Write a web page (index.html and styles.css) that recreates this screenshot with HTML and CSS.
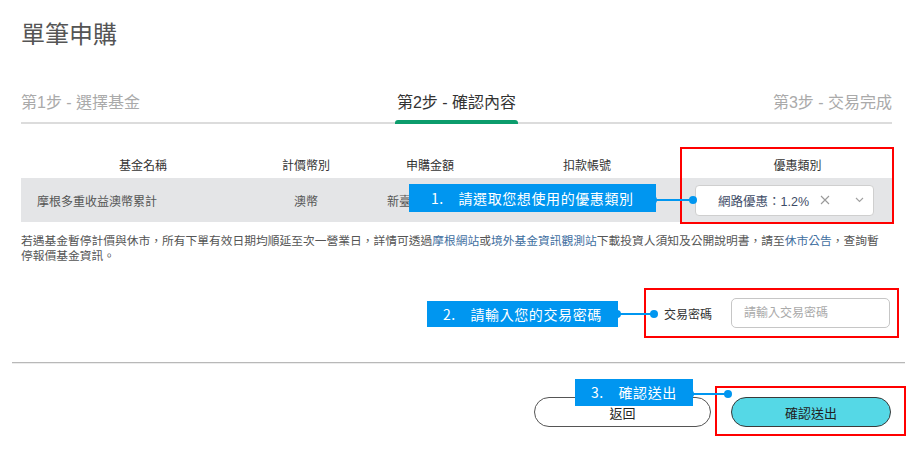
FILE: index.html
```html
<!DOCTYPE html>
<html lang="zh-Hant">
<head>
  <meta charset="UTF-8">
  <meta name="viewport" content="width=device-width, initial-scale=1.0">
  <title>單筆申購</title>
  <link rel="stylesheet" href="styles.css">
</head>
<body>
  <div class="page">
    <h1 class="title">單筆申購</h1>

    <div class="steps">
      <div class="step">第1步 - 選擇基金</div>
      <div class="step active">第2步 - 確認內容</div>
      <div class="step">第3步 - 交易完成</div>
    </div>

    <div class="fund-table">
      <div class="row head">
        <div class="cell">基金名稱</div>
        <div class="cell">計價幣別</div>
        <div class="cell">申購金額</div>
        <div class="cell">扣款帳號</div>
        <div class="cell promo">優惠類別</div>
      </div>
      <div class="row data">
        <div class="cell name">摩根多重收益澳幣累計</div>
        <div class="cell">澳幣</div>
        <div class="cell amount">新臺幣</div>
        <div class="cell"></div>
        <div class="cell promo">
          <div class="select">
            <span class="select-value">網路優惠：1.2%</span>
            <svg class="select-clear" width="10" height="10" viewBox="0 0 10 10"><path d="M1 1 L9 9 M9 1 L1 9" stroke="#9a9a9a" stroke-width="1.1" fill="none"/></svg>
            <svg class="select-arrow" width="9" height="6" viewBox="0 0 9 6"><path d="M1 1 L4.5 4.5 L8 1" stroke="#a0a0a0" stroke-width="1.1" fill="none"/></svg>
          </div>
        </div>
      </div>

      <div class="mark mark-promo"></div>
      <div class="callout callout-promo">1.　請選取您想使用的優惠類別</div>
      <div class="pin pin-promo"></div>
    </div>

    <p class="notice">若遇基金暫停計價與休市，所有下單有效日期均順延至次一營業日，詳情可透過<a href="#">摩根網站</a>或<a href="#">境外基金資訊觀測站</a>下載投資人須知及公開說明書，請至<a href="#">休市公告</a>，查詢暫<br>停報價基金資訊。</p>

    <div class="pw-row">
      <label for="tradePw" class="pw-label">交易密碼</label>
      <input type="password" id="tradePw" class="pw-input" placeholder="請輸入交易密碼">

      <div class="mark mark-pw"></div>
      <div class="callout callout-pw">2.　請輸入您的交易密碼</div>
      <div class="pin pin-pw"></div>
    </div>

    <hr class="divider">

    <div class="actions">
      <button type="button" class="btn btn-back">返回</button>
      <div class="mark-box">
        <button type="button" class="btn btn-submit">確認送出</button>
      </div>

      <div class="callout callout-submit">3.　確認送出</div>
      <div class="pin pin-submit"></div>
    </div>
  </div>
</body>
</html>
```

FILE: styles.css
```css
/* General Reset */
* {
  margin: 0;
  padding: 0;
  box-sizing: border-box;
}

html, body {
  height: 460px;
  overflow: hidden;
}

body {
  background: #ffffff;
  color: #333;
  font-family: "Liberation Sans", "Noto Sans CJK TC", sans-serif;
}

.page {
  padding: 0 16px 0 12px;
}

.title {
  margin: 18px 13px 0 9px;
  font-size: 24px;
  line-height: 34px;
  font-weight: normal;
  color: #555;
}

/* Steps */
.steps {
  display: flex;
  justify-content: space-between;
  margin: 39px 13px 0 9px;
  border-bottom: 2px solid #dcdcdc;
}

.step {
  position: relative;
  font-size: 16px;
  line-height: 24px;
  padding-bottom: 7px;
  color: #aaa;
}

.step.active {
  color: #333;
}

/* green underline sits over the grey line */
.step.active::after {
  content: "";
  position: absolute;
  left: -2px;
  right: -2px;
  bottom: -2px;
  height: 4px;
  background: #0c9c6c;
  border-radius: 3px 3px 0 0;
}

/* Fund table */
.fund-table {
  position: relative;
  margin: 26px 13px 0 9px;
}

.row {
  display: grid;
  grid-template-columns: 244px 82px 166px 148px 1fr;
  align-items: center;
  font-size: 12px;
}

.row.head {
  height: 28px;
  color: #333;
}

.row.data {
  height: 44px;
  background: #e4e5e7;
  color: #555;
}

.cell {
  text-align: center;
  white-space: nowrap;
}

.cell.name {
  text-align: left;
  padding-left: 16px;
}

.cell.amount {
  text-align: left;
  padding-left: 40px;
}

.head .promo {
  padding-left: 42px;
}

.data .promo {
  padding-left: 34px;
}

.select {
  display: flex;
  align-items: center;
  width: 179px;
  height: 31px;
  background: #fff;
  border: 1px solid #cfcfcf;
  border-radius: 4px;
  padding-left: 22px;
  text-align: left;
}

.select-value {
  flex: 1;
  font-size: 12.5px;
  color: #3d4b66;
}

.select-clear {
  margin-right: 25px;
}

.select-arrow {
  margin-right: 9px;
}

.notice {
  margin: 11px 0 0 9px;
  font-size: 11.75px;
  line-height: 15px;
  color: #555;
  white-space: nowrap;
}

.notice a {
  color: #3f6f9f;
  text-decoration: none;
}

/* Password */
.pw-row {
  position: relative;
  display: flex;
  justify-content: flex-end;
  align-items: center;
  gap: 19px;
  height: 30px;
  margin: 35px 13px 0 9px;
  padding-right: 2px;
}

.pw-label {
  font-size: 12px;
  color: #333;
}

.pw-input {
  width: 159px;
  height: 30px;
  border: 1px solid #c6c6c6;
  border-radius: 5px;
  padding-left: 12px;
  font-size: 12px;
  font-family: inherit;
}

.pw-input::placeholder {
  color: #aaa;
}

.divider {
  margin-top: 34px;
  border: none;
  border-top: 1px solid #b8b8b8;
  border-bottom: 1px solid #ececec;
}

/* Buttons */
.actions {
  position: relative;
  display: flex;
  justify-content: flex-end;
  align-items: flex-start;
  gap: 20px;
  margin: 33px 13px 0 9px;
  padding-right: 1px;
}

.btn {
  display: block;
  height: 30px;
  border-radius: 15px;
  font-size: 13px;
  font-family: inherit;
  color: #222;
  cursor: pointer;
}

.btn-back {
  width: 177px;
  background: #fff;
  border: 1px solid #555;
}

.btn-submit {
  width: 160px;
  background: #55d8e6;
  border: 1px solid #3a3a3a;
}

/* Annotation overlays */
.mark {
  position: absolute;
  border: 2px solid #ff0000;
  pointer-events: none;
}

.mark-promo  { left: 659px; top: -3px;  width: 214px; bottom: -2px; }
.mark-pw     { left: 623px; top: -10px; width: 255px; bottom: -10px; }

/* red frame around the submit button */
.mark-box {
  height: 50px;
  border: 2px solid #ff0000;
  padding: 9px 13px 7px 14px;
  margin: -11px -15px -9px -16px;
  background: #fff;
}

.callout {
  position: absolute;
  background: #0096f0;
  color: #fff;
  font-family: "Noto Sans CJK TC", sans-serif;
  font-size: 14px;
  letter-spacing: 0.6px;
  line-height: 27px;
  padding: 0 16px;
  white-space: nowrap;
  z-index: 2;
}

.callout-promo  { left: 388px; top: 34px; line-height: 28px; padding: 0 22px; }
.callout-pw     { left: 406px; top: 3px; line-height: 26px; }
.callout-submit { left: 554px; top: -18px; }

.pin {
  position: absolute;
  height: 2px;
  background: #0096f0;
  z-index: 2;
}

.pin::before,
.pin::after {
  content: "";
  position: absolute;
  top: -3px;
  width: 8px;
  height: 8px;
  border-radius: 50%;
  background: #0096f0;
}

.pin::before { left: -4px; }
.pin::after  { right: -4px; }

.pin-promo  { left: 632px; top: 49px; width: 40px; }
.pin-pw     { left: 596px; top: 15px; width: 37px; }
.pin-submit { left: 669px; top: -4px; width: 38px; }
```
